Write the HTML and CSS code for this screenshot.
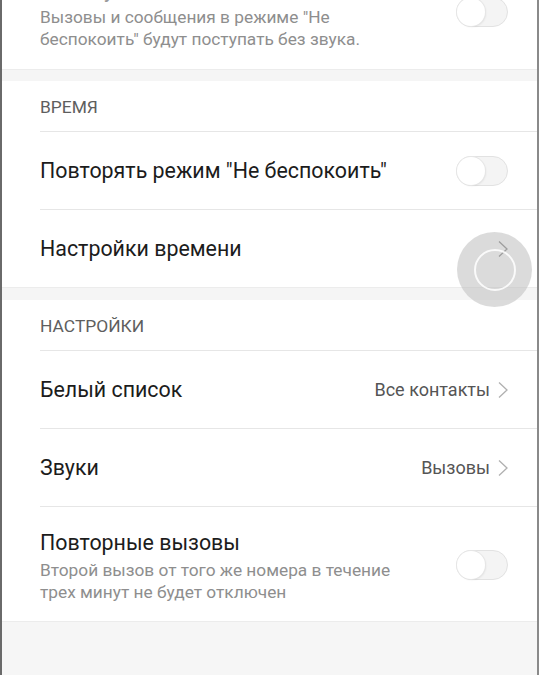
FILE: index.html
```html
<!DOCTYPE html>
<html>
<head>
<meta charset="utf-8">
<title>Не беспокоить</title>
<link rel="stylesheet" href="styles.css">
</head>
<body>
<div class="screen">

	<div class="card first">
		<div class="row tall">
			<div class="text">
				<div class="title faded">Без звука</div>
				<div class="sub">Вызовы и сообщения в режиме "Не беспокоить" будут поступать без звука.</div>
			</div>
			<span class="switch"><span class="knob"></span></span>
		</div>
	</div>

	<div class="gap"></div>

	<div class="card">
		<div class="header">ВРЕМЯ</div>
		<div class="row">
			<div class="title">Повторять режим "Не беспокоить"</div>
			<span class="switch"><span class="knob"></span></span>
		</div>
		<div class="row">
			<div class="title">Настройки времени</div>
			<svg class="chev" width="12" height="18" viewBox="0 0 12 18"><path d="M2 1.5 L10 9 L2 16.5" fill="none" stroke="#777" stroke-width="1.3"/></svg>
		</div>
	</div>

	<div class="gap"></div>

	<div class="card">
		<div class="header">НАСТРОЙКИ</div>
		<div class="row">
			<div class="title">Белый список</div>
			<div class="value">Все контакты</div>
			<svg class="chev" width="12" height="18" viewBox="0 0 12 18"><path d="M2 1.5 L10 9 L2 16.5" fill="none" stroke="#b0b0b0" stroke-width="1.3"/></svg>
		</div>
		<div class="row">
			<div class="title">Звуки</div>
			<div class="value">Вызовы</div>
			<svg class="chev" width="12" height="18" viewBox="0 0 12 18"><path d="M2 1.5 L10 9 L2 16.5" fill="none" stroke="#b0b0b0" stroke-width="1.3"/></svg>
		</div>
		<div class="row tall">
			<div class="text">
				<div class="title">Повторные вызовы</div>
				<div class="sub">Второй вызов от того же номера в течение трех минут не будет отключен</div>
			</div>
			<span class="switch"><span class="knob"></span></span>
		</div>
	</div>

	<div class="bottom"></div>

	<!-- touch feedback over the time settings row -->
	<div class="touch"><div class="ring"></div></div>
</div>
</body>
</html>
```

FILE: styles.css
```css
@charset "utf-8";

html, body{
	margin:0;
	padding:0;
	background:#fff;
	height:675px;
	overflow:hidden;
}

body{
	font-family:Roboto, "Noto Sans", sans-serif;
	color:#1c1c1c;
}

.screen{
	position:relative;
	width:535px;
	height:675px;
	border-left:2px solid #6a6a6a;
	border-right:2px solid #8a8a8a;
	background:#f6f6f6;
	overflow:hidden;
}

.card{
	background:#fff;
}

.card.first{
	margin-top:-46px;
}

.gap{
	height:12px;
	background:#f5f5f5;
	border-top:1px solid #ececec;
}

.card.first + .gap{
	height:11px;
}

.bottom{
	height:60px;
	background:#f6f6f6;
	border-top:1px solid #ececec;
}

.header{
	height:50px;
	margin-left:38px;
	display:flex;
	align-items:center;
	padding-top:2px;
	box-sizing:border-box;
	font-size:17.4px;
	color:#5e5e5e;
}

.row{
	display:flex;
	align-items:center;
	height:78px;
	margin-left:38px;
	padding-right:29px;
	border-top:1px solid #e6e6e6;
	box-sizing:border-box;
}

.card.first .row{
	border-top:none;
}

.row.tall{
	height:115px;
	padding-top:22px;
	padding-bottom:19px;
	align-items:flex-start;
}

.row.tall .switch{
	align-self:center;
	margin-top:-2px;
}

.text{
	flex:1;
	padding-right:41px;
}

.title{
	flex:1;
	font-size:21.4px;
	line-height:28px;
	color:#1c1c1c;
}

.title.faded{
	color:#9a9a9a;
}

.sub{
	margin-top:2px;
	font-size:17.3px;
	line-height:22px;
	color:#8e8e8e;
}

.value{
	font-size:18px;
	color:#555;
	margin-right:7px;
}

.chev{
	display:block;
	margin-right:-1px;
}

.switch{
	position:relative;
	display:block;
	width:50px;
	height:28px;
	border:1px solid #e2e2e2;
	border-radius:15px;
	background:#f4f4f4;
	flex:none;
}

.knob{
	position:absolute;
	left:0;
	top:0;
	width:28px;
	height:28px;
	border-radius:50%;
	background:#fff;
	box-shadow:0 0 0 1px #e6e6e6, 1px 1px 2px rgba(0,0,0,0.08);
}

.touch{
	position:absolute;
	left:455px;
	top:232px;
	width:75px;
	height:75px;
	border-radius:50%;
	background:rgba(190,190,190,0.55);
	display:flex;
	align-items:center;
	justify-content:center;
}

.ring{
	width:38px;
	height:38px;
	border-radius:50%;
	border:2px solid rgba(255,255,255,0.85);
}
```
